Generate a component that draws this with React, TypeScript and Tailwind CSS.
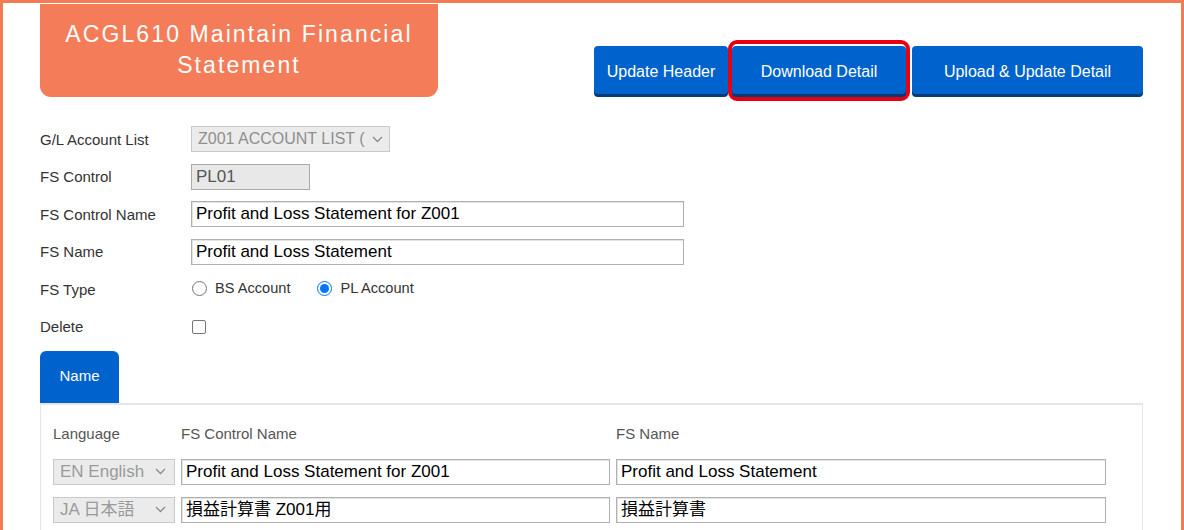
import React from "react";

const Chevron = ({ className = "" }: { className?: string }) => (
  <svg className={className} width="11" height="7" viewBox="0 0 11 7" fill="none">
    <path d="M1 1l4.5 4.5L10 1" stroke="#8a8a8a" strokeWidth="1.3" />
  </svg>
);

const Row = ({ label, children }: { label: string; children: React.ReactNode }) => (
  <div className="flex items-center h-[26px]">
    <div className="w-[151px] text-[15px] text-[#333] leading-none">{label}</div>
    {children}
  </div>
);

export default function App() {
  return (
    <div
      className="w-[1184px] h-[530px] overflow-hidden border-[3px] border-b-0 border-[#f47c55] bg-white"
      style={{ fontFamily: '"Liberation Sans", Arial, "Noto Sans CJK JP", sans-serif' }}
    >
      <div className="pl-[37px] pr-[38px]">
        {/* Header */}
        <div className="flex items-end justify-between">
          <div className="mt-[1px] w-[398px] h-[93px] rounded-b-[11px] bg-[#f47c58] flex flex-col items-center justify-center text-white text-[23px] leading-[31px] tracking-[2.1px] pb-[1px]">
            <div>ACGL610 Maintain Financial</div>
            <div>Statement</div>
          </div>
          <div className="flex items-start gap-[4px] pb-[3px]">
            <button className="w-[134px] h-[48px] pt-[3px] rounded-[4px] bg-[#0062cc] text-white text-[16px] shadow-[0_3px_0_#063a78]">
              Update Header
            </button>
            <div className="relative">
              <div className="absolute -left-[4px] -right-[4px] -top-[6px] -bottom-[7px] rounded-[9px] border-[4px] border-[#e60012]" />
              <button className="relative w-[174px] h-[48px] pt-[3px] rounded-[4px] bg-[#0062cc] text-white text-[16px] shadow-[0_3px_0_#063a78]">
                Download Detail
              </button>
            </div>
            <button className="ml-[2px] w-[231px] h-[48px] pt-[3px] rounded-[4px] bg-[#0062cc] text-white text-[16px] shadow-[0_3px_0_#063a78]">
              Upload &amp; Update Detail
            </button>
          </div>
        </div>

        {/* Form */}
        <div className="mt-[29px] flex flex-col gap-[11.5px]">
          <Row label="G/L Account List">
            <div className="w-[199px] h-[26px] flex items-center justify-between bg-[#ebebeb] border border-[#c9c9c9] pl-[6px] pr-[6px]">
              <span className="text-[16px] text-[#8f8f8f] whitespace-nowrap">Z001 ACCOUNT LIST (</span>
              <Chevron />
            </div>
          </Row>
          <Row label="FS Control">
            <div className="w-[119px] h-[26px] flex items-center bg-[#e8e8e8] border border-[#a9a9a9] pl-[4px] text-[17px] text-[#555]">
              PL01
            </div>
          </Row>
          <Row label="FS Control Name">
            <div className="w-[493px] h-[26px] flex items-center border border-[#b0b0b0] shadow-[inset_1px_1px_0_#e4e4e4] pl-[4px] text-[17px] text-black">
              Profit and Loss Statement for Z001
            </div>
          </Row>
          <Row label="FS Name">
            <div className="w-[493px] h-[26px] flex items-center border border-[#b0b0b0] shadow-[inset_1px_1px_0_#e4e4e4] pl-[4px] text-[17px] text-black">
              Profit and Loss Statement
            </div>
          </Row>
          <Row label="FS Type">
            <div className="flex items-center text-[14.6px] text-[#333]">
              <span className="w-[15px] h-[15px] rounded-full border border-[#767676] ml-[1px]" />
              <span className="ml-[8px]">BS Account</span>
              <span className="ml-[27px] w-[15px] h-[15px] rounded-full border-[1.5px] border-[#0075ff] flex items-center justify-center">
                <span className="w-[9px] h-[9px] rounded-full bg-[#0075ff]" />
              </span>
              <span className="ml-[8px]">PL Account</span>
            </div>
          </Row>
          <Row label="Delete">
            <span className="ml-[1px] w-[14px] h-[14px] rounded-[2px] border border-[#767676]" />
          </Row>
        </div>

        {/* Tab */}
        <div className="mt-[11px] w-[79px] h-[52px] rounded-t-[6px] bg-[#0062cc] text-white text-[15px] flex items-center justify-center">
          Name
        </div>

        {/* Panel */}
        <div className="w-[1103px] border-t-2 border-x border-[#e6e6e6] pt-[20px] pl-[12px] pb-[20px]">
          <div className="flex text-[15px] text-[#555] h-[20px] items-center">
            <div className="w-[128px]">Language</div>
            <div className="w-[435px]">FS Control Name</div>
            <div>FS Name</div>
          </div>
          <div className="mt-[14px] flex flex-col gap-[12px]">
            {[
              { lang: "EN English", ctrl: "Profit and Loss Statement for Z001", name: "Profit and Loss Statement" },
              { lang: "JA 日本語", ctrl: "損益計算書 Z001用", name: "損益計算書" },
            ].map((r) => (
              <div key={r.lang} className="flex gap-[6px] h-[26px]">
                <div className="w-[122px] h-[26px] flex items-center justify-between bg-[#ebebeb] border border-[#c9c9c9] pl-[6px] pr-[8px]">
                  <span className="text-[17px] text-[#9a9a9a] whitespace-nowrap">{r.lang}</span>
                  <Chevron />
                </div>
                <div className="w-[429px] h-[26px] flex items-center border border-[#b0b0b0] shadow-[inset_1px_1px_0_#e4e4e4] pl-[4px] text-[17px] text-black whitespace-nowrap">
                  {r.ctrl}
                </div>
                <div className="w-[490px] h-[26px] flex items-center border border-[#b0b0b0] shadow-[inset_1px_1px_0_#e4e4e4] pl-[4px] text-[17px] text-black whitespace-nowrap">
                  {r.name}
                </div>
              </div>
            ))}
          </div>
        </div>
      </div>
    </div>
  );
}
